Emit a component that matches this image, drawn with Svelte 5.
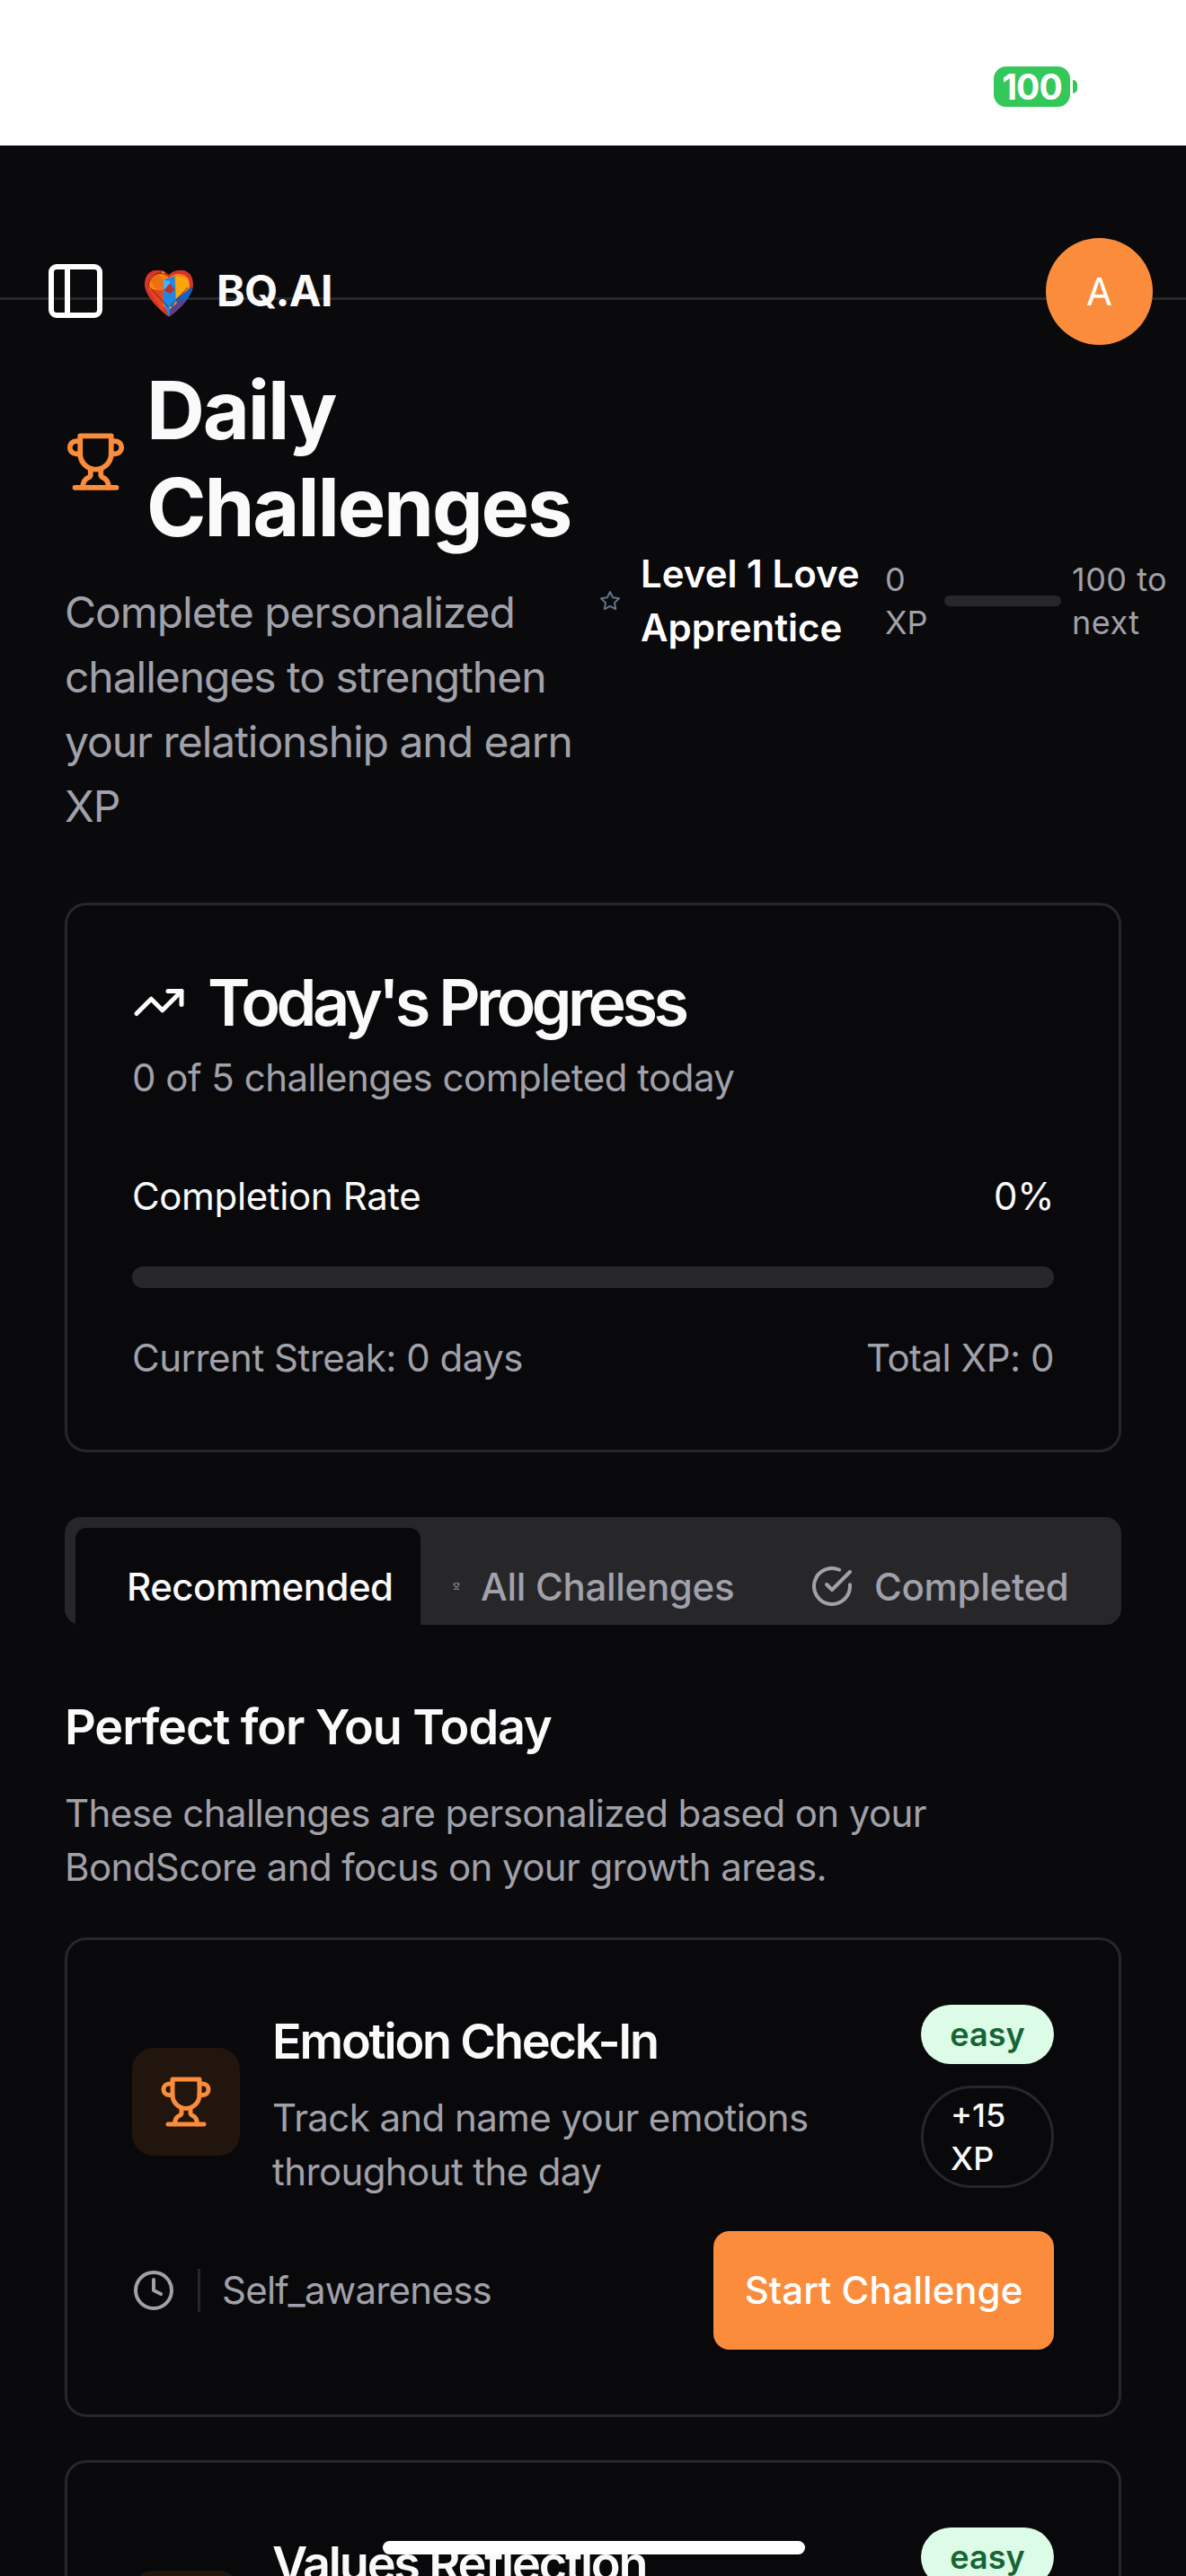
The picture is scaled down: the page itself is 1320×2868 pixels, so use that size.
<script>
  const challenges = [
    { title: 'Emotion Check-In', desc: 'Track and name your emotions throughout the day', xp: 15, cat: 'Self_awareness' },
    { title: 'Values Reflection', desc: 'Reflect on what matters most to you both', xp: 15, cat: 'Self_awareness' }
  ];
</script>

{#snippet trophy(cls)}
  <svg class={cls} viewBox="0 0 24 24" fill="none" stroke="currentColor" stroke-width="2" stroke-linecap="round" stroke-linejoin="round">
    <path d="M6 9H4.5a2.5 2.5 0 0 1 0-5H6"/><path d="M18 9h1.5a2.5 2.5 0 0 0 0-5H18"/><path d="M4 22h16"/>
    <path d="M10 14.66V17c0 .55-.47.98-.97 1.21C7.85 18.75 7 20.24 7 22"/>
    <path d="M14 14.66V17c0 .55.47.98.97 1.21C16.15 18.75 17 20.24 17 22"/>
    <path d="M18 2H6v7a6 6 0 0 0 12 0V2Z"/>
  </svg>
{/snippet}

<div class="screen">
  <div class="status">
    <div class="battery"><span class="batt-body">100</span><span class="batt-nub"></span></div>
  </div>

  <div class="dark">
    <header class="topbar">
      <div class="topbar-row">
        <svg class="panel" viewBox="0 0 24 24" fill="none" stroke="currentColor" stroke-width="2" stroke-linecap="round" stroke-linejoin="round">
          <rect width="18" height="18" x="3" y="3" rx="2"/><path d="M9 3v18"/>
        </svg>
        <svg class="heart" viewBox="118 88 162 160">
          <defs>
            <clipPath id="hc"><path d="M199 108C180 85 118 80 118 140C118 175 165 225 199 248C235 225 280 175 280 140C280 80 218 85 199 108Z"/></clipPath>
          </defs>
          <g clip-path="url(#hc)">
            <rect x="118" y="88" width="162" height="160" fill="#d8342a"/>
            <path d="M199 118C180 98 135 98 131 140C130 165 170 205 199 228C225 205 268 165 268 138C266 98 218 98 199 118Z" fill="#f5860f"/>
            <polygon points="222,112 262,120 268,150 222,190" fill="#fba60c"/>
            <polygon points="135,120 165,105 180,125 180,160 150,150" fill="#ee6f10"/>
            <polygon points="131,155 180,160 180,232" fill="#e8431f"/>
            <polygon points="180,125 218,112 222,190 200,248 180,200" fill="#1e88e5"/>
            <polygon points="180,125 200,128 206,142 182,158" fill="#4fb3f6"/>
            <polygon points="182,160 202,136 218,158 204,172" fill="#b8323a"/>
            <polygon points="222,190 280,145 280,180 232,228" fill="#1560c4"/>
            <polygon points="200,248 204,218 250,188 262,205" fill="#5e3f8c"/>
            <path d="M199 108C180 95 135 100 131 145L199 218L262 150" fill="none" stroke="#5a1616" stroke-width="2.5"/>
            <circle cx="180" cy="100" r="4" fill="#e8a020"/><circle cx="203" cy="217" r="4" fill="#e8a020"/>
          </g>
        </svg>
        <span class="brand">BQ.AI</span>
        <div class="avatar">A</div>
      </div>
    </header>

    <main>
      <section class="hero">
        <div class="hero-left">
          <div class="hero-title">
            {@render trophy('t72')}
            <h1>Daily Challenges</h1>
          </div>
          <p class="lead">Complete personalized challenges to strengthen your relationship and earn XP</p>
        </div>
        <div class="level">
          <svg class="star" viewBox="0 0 24 24" fill="none" stroke="currentColor" stroke-width="2" stroke-linecap="round" stroke-linejoin="round">
            <polygon points="12 2 15.09 8.26 22 9.27 17 14.14 18.18 21.02 12 17.77 5.82 21.02 7 14.14 2 9.27 8.91 8.26 12 2"/>
          </svg>
          <div class="level-name">Level 1 Love Apprentice</div>
          <div class="level-xp">0 XP</div>
          <div class="level-bar"></div>
          <div class="level-next">100 to next</div>
        </div>
      </section>

      <section class="card progress">
        <div class="p-title">
          <svg class="trend" viewBox="0 0 24 24" fill="none" stroke="currentColor" stroke-width="2" stroke-linecap="round" stroke-linejoin="round">
            <polyline points="22 7 13.5 15.5 8.5 10.5 2 17"/><polyline points="16 7 22 7 22 13"/>
          </svg>
          <h2>Today's Progress</h2>
        </div>
        <p class="p-sub">0 of 5 challenges completed today</p>
        <div class="p-row strong"><span>Completion Rate</span><span>0%</span></div>
        <div class="p-bar"></div>
        <div class="p-row muted"><span>Current Streak: 0 days</span><span>Total XP: 0</span></div>
      </section>

      <nav class="tabs">
        <div class="tab active">Recommended</div>
        <div class="tab all">{@render trophy('t8')}<span>All Challenges</span></div>
        <div class="tab done">
          <svg class="t48" viewBox="0 0 24 24" fill="none" stroke="currentColor" stroke-width="2" stroke-linecap="round" stroke-linejoin="round">
            <path d="M22 11.08V12a10 10 0 1 1-5.93-9.14"/><path d="m9 11 3 3L22 4"/>
          </svg>
          <span>Completed</span>
        </div>
      </nav>

      <h3 class="sec-title">Perfect for You Today</h3>
      <p class="sec-desc">These challenges are personalized based on your BondScore and focus on your growth areas.</p>

      <div class="list">
        {#each challenges as c}
          <article class="card challenge">
            <div class="c-top">
              <div class="c-icon">{@render trophy('t60')}</div>
              <div class="c-text">
                <h4>{c.title}</h4>
                <p>{c.desc}</p>
              </div>
              <div class="c-badges">
                <span class="easy">easy</span>
                <span class="xp">+{c.xp} XP</span>
              </div>
            </div>
            <div class="c-bottom">
              <svg class="t48 clock" viewBox="0 0 24 24" fill="none" stroke="currentColor" stroke-width="2" stroke-linecap="round" stroke-linejoin="round">
                <circle cx="12" cy="12" r="10"/><polyline points="12 6 12 12 16 14"/>
              </svg>
              <span class="sep"></span>
              <span class="cat">{c.cat}</span>
              <button>Start Challenge</button>
            </div>
          </article>
        {/each}
      </div>
    </main>
  </div>

  <div class="home"></div>
</div>

<style>
  :global(body) { margin: 0; background: #0a0a0c; }
  .screen {
    position: relative; width: 1320px; height: 2868px; overflow: hidden;
    font-family: Inter, "Liberation Sans", sans-serif; color: #fafafa;
    background: #0a0a0c;
  }
  .status { height: 162px; background: #fff; display: flex; justify-content: flex-end; box-sizing: border-box; padding: 74px 121px 0 0; }
  .battery { display: flex; align-items: center; height: 45px; gap: 3px; }
  .batt-body {
    width: 85px; height: 45px; border-radius: 14px; background: #34c759; color: #fff;
    font: 700 39px/45px Inter, sans-serif; text-align: center; letter-spacing: -1px;
  }
  .batt-nub { width: 5px; height: 15px; background: #34c759; border-radius: 0 6px 6px 0; }

  .topbar { height: 172px; box-sizing: border-box; padding: 102px 37px 0 48px; border-bottom: 3px solid #27272a; }
  .topbar-row { display: flex; align-items: center; height: 120px; }
  .panel { width: 72px; height: 72px; flex: none; color: #fff; }
  .heart { width: 54px; height: 54px; flex: none; margin: 3px 0 0 41px; }
  .brand { font-size: 48px; font-weight: 700; margin-left: 26px; color: #fafafa; line-height: 60px; letter-spacing: -0.7px; }
  .avatar {
    width: 119px; height: 119px; border-radius: 50%; background: #fb8c3c; color: #fff; margin-left: auto;
    display: flex; align-items: center; justify-content: center; font-size: 42px; font-weight: 400;
  }

  main { padding: 69px 72px 0; }
  .hero { display: flex; align-items: center; gap: 27px; }
  .hero-left { width: 568px; flex: none; }
  .hero-title { display: flex; align-items: center; gap: 22px; }
  .t72 { width: 69px; height: 72px; flex: none; color: #fb8c3c; margin-top: 5px; }
  h1 { margin: 0; font-size: 90px; line-height: 108px; font-weight: 700; color: #fafafa; letter-spacing: -2.2px; }
  .lead { margin: 27px 0 0; font-size: 48px; line-height: 72px; color: #a1a1aa; letter-spacing: -1.05px; }
  .level { display: flex; align-items: center; flex: 1; min-width: 0; }
  .star { width: 24px; height: 24px; flex: none; color: #64748b; margin-right: 22px; }
  .level-name { width: 246px; flex: none; font-size: 42px; line-height: 60px; font-weight: 600; color: #fff; margin-right: 26px; }
  .level-xp { width: 42px; flex: none; font-size: 36px; line-height: 48px; color: #a1a1aa; margin-right: 24px; }
  .level-bar { width: 130px; height: 12px; flex: none; border-radius: 6px; background: #27272a; margin-right: 12px; }
  .level-next { flex: none; width: 110px; font-size: 36px; line-height: 48px; color: #a1a1aa; letter-spacing: 0.5px; }

  .card { border: 3px solid #27272a; border-radius: 24px; background: #09090b; box-sizing: border-box; }
  .progress { margin-top: 71px; padding: 72px; height: 612px; }
  .p-title { display: flex; align-items: center; gap: 24px; height: 72px; }
  .trend { width: 60px; height: 60px; flex: none; color: #fff; }
  h2 { margin: 0; font-size: 72px; line-height: 72px; font-weight: 600; letter-spacing: -4.6px; color: #fafafa; }
  .p-sub { margin: 18px 0 0; font-size: 42px; line-height: 60px; color: #a1a1aa; letter-spacing: -0.5px; }
  .p-row { display: flex; justify-content: space-between; font-size: 42px; line-height: 60px; }
  .strong { margin-top: 72px; color: #fafafa; letter-spacing: -0.37px; }
  .p-bar { height: 24px; margin-top: 48px; background: #27272a; border-radius: 12px; }
  .muted { margin-top: 48px; color: #a1a1aa; letter-spacing: -0.5px; }

  .tabs {
    margin-top: 72px; height: 120px; box-sizing: border-box; padding: 12px 12px 0; background: #27272a;
    border-radius: 18px; overflow: hidden; display: flex; align-items: flex-start;
  }
  .tab { height: 130px; display: flex; align-items: center; font-size: 42px; font-weight: 500; color: #a1a1aa; box-sizing: border-box; flex: none; letter-spacing: -0.3px; }
  .active { width: 384px; padding-left: 57px; background: #09090b; color: #fafafa; border-radius: 12px 12px 0 0; letter-spacing: -0.5px; }
  .all { width: 395px; padding-left: 36px; gap: 23px; }
  .done { padding-left: 39px; gap: 23px; }
  .t8 { width: 8px; height: 8px; flex: none; stroke-width: 2; }
  .t48 { width: 48px; height: 48px; flex: none; }

  .sec-title { margin: 72px 0 0; font-size: 54px; line-height: 84px; font-weight: 600; color: #fafafa; letter-spacing: -1.1px; }
  .sec-desc { margin: 24px 0 0; font-size: 42px; line-height: 60px; color: #a1a1aa; width: 1000px; letter-spacing: -0.6px; }

  .list { margin-top: 48px; display: flex; flex-direction: column; gap: 48px; }
  .challenge { padding: 72px; }
  .c-top { display: flex; align-items: center; }
  .c-icon { width: 120px; height: 120px; flex: none; border-radius: 24px; background: #22150e; color: #fb8c3c; display: flex; align-items: center; justify-content: center; }
  .t60 { width: 60px; height: 60px; }
  .c-text { width: 660px; margin-left: 36px; flex: none; }
  h4 { margin: 0 0 15px; font-size: 54px; line-height: 81px; font-weight: 600; letter-spacing: -2.2px; color: #fafafa; }
  .c-text p { margin: 0; font-size: 42px; line-height: 60px; color: #a1a1aa; letter-spacing: -0.6px; }
  .c-badges { margin-left: auto; align-self: flex-start; width: 148px; display: flex; flex-direction: column; gap: 24px; }
  .easy { height: 66px; border-radius: 33px; background: #dcfce7; color: #166534; font-size: 36px; font-weight: 600; line-height: 66px; text-align: center; }
  .xp { box-sizing: border-box; border: 3px solid #27272a; border-radius: 57px; padding: 6px 30px; font-size: 36px; line-height: 48px; font-weight: 500; color: #fafafa; }
  .c-bottom { display: flex; align-items: center; margin-top: 36px; }
  .clock { color: #a1a1aa; }
  .sep { width: 3px; height: 48px; background: #27272a; margin: 0 24px 0 25px; }
  .cat { font-size: 42px; line-height: 60px; color: #a1a1aa; letter-spacing: -0.75px; }
  button {
    margin-left: auto; width: 379px; height: 132px; border: 0; border-radius: 18px; background: #fb8c3c; color: #fff;
    font: 500 42px/60px Inter, sans-serif;
  }
  .home { position: absolute; left: 426px; top: 2829px; width: 470px; height: 15px; border-radius: 8px; background: #fff; }
</style>
